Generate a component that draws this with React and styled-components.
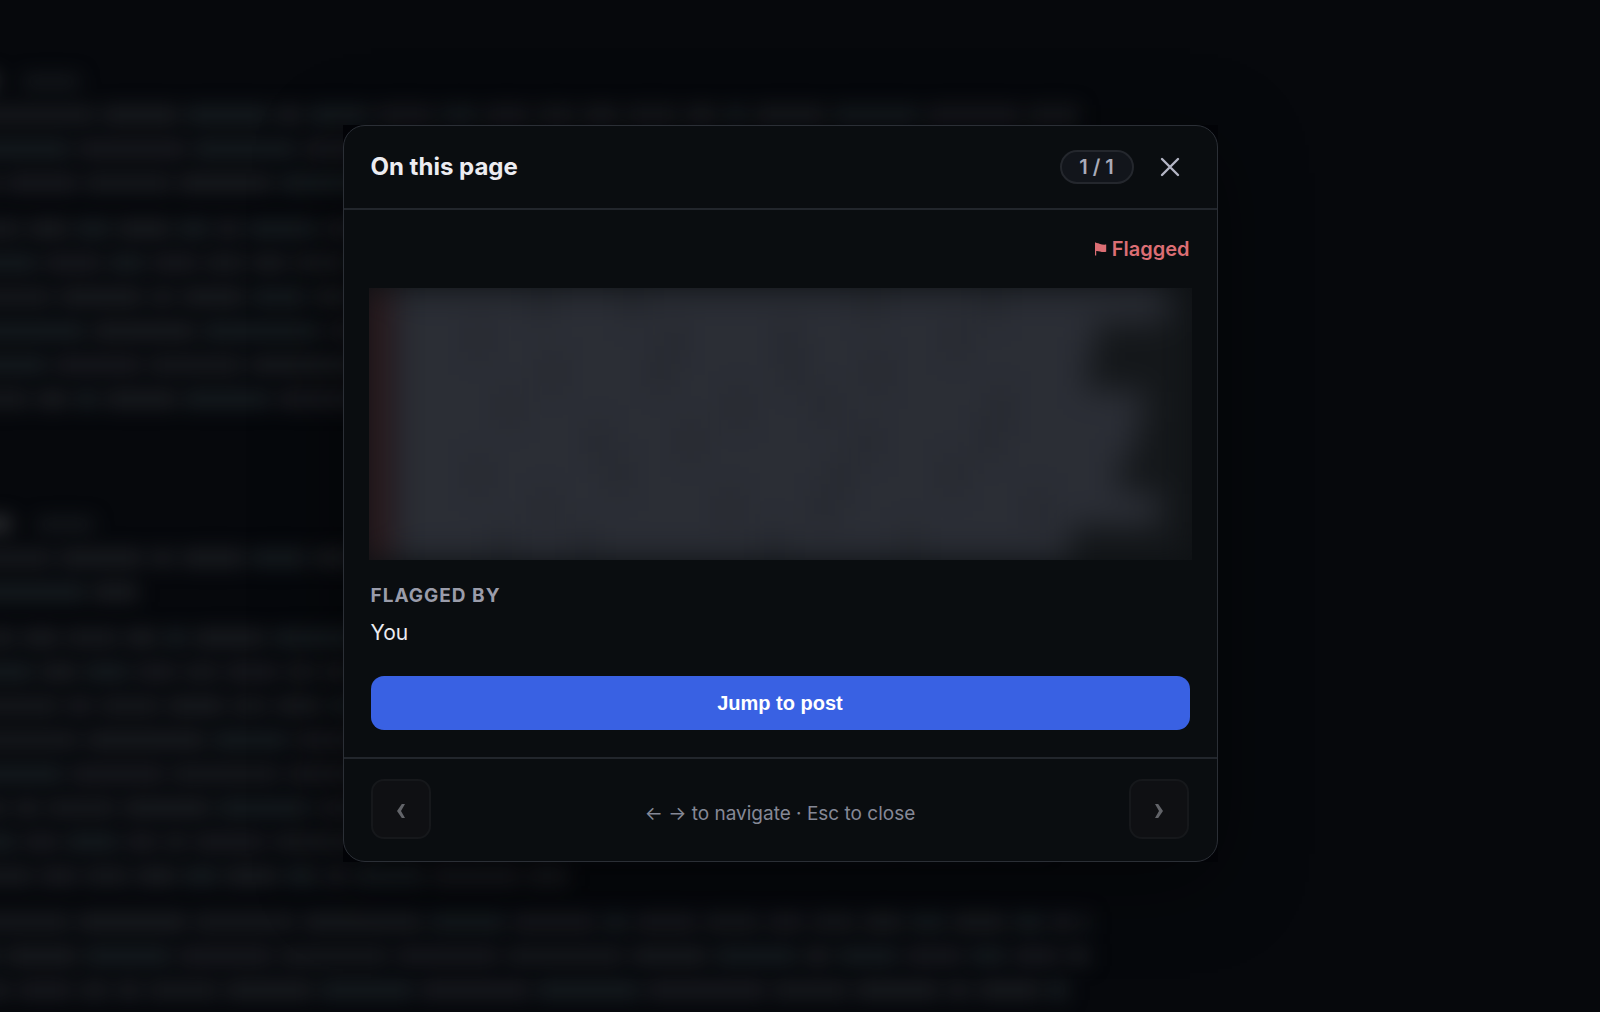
import React from "react";
import styled, { createGlobalStyle } from "styled-components";

const GlobalStyle = createGlobalStyle`
  *, *::before, *::after { box-sizing: border-box; }
  html, body { margin: 0; background: #06080c; }
  body { font-family: Inter, "Liberation Sans", sans-serif; color: #ececf1; }
  h2, h3, p { margin: 0; font: inherit; }
`;

const Page = styled.div`
  position: relative;
  min-height: 100vh;
  overflow: hidden;
  display: grid;
  background: #06080c;
`;

/* Blurred forum thread behind the dialog */
const Thread = styled.div`
  position: absolute;
  inset: 0 0 0 -24px;
  overflow: hidden;
  filter: blur(9px);
  padding-top: 64px;
`;
const Post = styled.div`
  max-width: 1114px;
  margin-bottom: ${(p) => p.$gap}px;
`;
const Paragraph = styled.div`
  margin-bottom: 12px;
`;
const Line = styled.div`
  display: flex;
  align-items: center;
  gap: 6px;
  height: 34px;
  width: ${(p) => p.$width};
  overflow: hidden;
`;
const Word = styled.span`
  flex: 0 0 auto;
  height: ${(p) => p.$height}px;
  border-radius: 4px;
  background: ${(p) => p.$color};
`;

const Overlay = styled.div`
  position: relative;
  display: flex;
  align-items: center;
  justify-content: center;
  padding: 24px 64px 49px 24px;
`;
const Frame = styled.div`
  width: 100%;
  max-width: 875px;
  background: #020307;
  box-shadow: 0 20px 80px rgba(0, 0, 0, 0.45);
`;
const Dialog = styled.section`
  border: 1px solid #2b2f36;
  border-radius: 22px;
  background: #0a0d10;
  overflow: hidden;
`;
const Header = styled.header`
  display: flex;
  align-items: center;
  gap: 16px;
  height: 84px;
  padding: 0 27px;
  border-bottom: 2px solid #22262c;
`;
const Title = styled.h2`
  flex: 1;
  font-size: 24px;
  line-height: 30px;
  font-weight: 700;
`;
const Counter = styled.span`
  display: flex;
  align-items: center;
  justify-content: center;
  min-width: 74px;
  height: 34px;
  border: 2px solid #24272d;
  border-radius: 17px;
  background: #12151b;
  color: #a9abb8;
  font-size: 20px;
  font-weight: 600;
`;
const CloseButton = styled.button`
  display: grid;
  place-items: center;
  width: 40px;
  height: 40px;
  padding: 0;
  border: 0;
  background: none;
  color: #b4b6c5;
  cursor: pointer;
`;
const Body = styled.div`
  padding: 24px 27px 27px;
`;
const Status = styled.p`
  display: flex;
  align-items: center;
  justify-content: flex-end;
  gap: 5px;
  height: 30px;
  color: #dc6e74;
  font-size: 20px;
  font-weight: 600;
`;
const Quote = styled.div`
  margin: 24px -2px;
  overflow: hidden;
  background: #0e1114;
`;
const QuoteBlur = styled.div`
  display: flex;
  flex-direction: column;
  border-left: 16px solid #3c1c20;
  background: #14171a;
  filter: blur(16px);
`;
const QuoteLine = styled.div`
  height: 34px;
  width: ${(p) => p.$width}%;
  display: flex;
  gap: 5px;
  padding: 1px 0 1px 10px;
  overflow: hidden;
`;
const QuoteWord = styled.span`
  flex: ${(p) => p.$size} 1 0;
  background: #2c2f37;
`;
const Label = styled.h3`
  color: #9a9caa;
  font-size: 19px;
  line-height: 24px;
  font-weight: 700;
  letter-spacing: 1px;
`;
const Flagger = styled.p`
  margin: 10px 0 28px;
  font-size: 21px;
  line-height: 30px;
`;
const JumpButton = styled.button`
  display: block;
  width: 100%;
  height: 54px;
  padding: 0;
  border: 0;
  border-radius: 13px;
  background: #3961e3;
  color: #fff;
  font: 700 20px "Liberation Sans", Arial, sans-serif;
  cursor: pointer;
`;
const Footer = styled.footer`
  display: flex;
  align-items: center;
  justify-content: space-between;
  padding: 20px 27px 22px;
  border-top: 2px solid #22262c;
`;
const NavButton = styled.button`
  display: grid;
  place-items: center;
  width: 60px;
  height: 60px;
  padding: 4px 0 0;
  border: 2px solid #16181b;
  border-radius: 13px;
  background: #0f1013;
  color: #626469;
`;
const Hint = styled.p`
  padding-top: 10px;
  color: #858896;
  font-size: 19px;
  line-height: 24px;
`;

const WORDS = [72, 38, 104, 54, 27, 88, 46, 120, 33, 62, 95, 41, 77, 24, 58, 110, 36, 84];
const TONES = ["#15171b", "#17191d", "#14191d", "#16171c"];

function TextLine({ seed, width = "98%" }) {
  const words = Array.from({ length: 22 }, (_, i) => (seed * 7 + i * 5) % WORDS.length);
  return (
    <Line $width={width}>
      {words.map((w, i) => (
        <Word key={i} $height={20} $color={TONES[(w + seed) % 4]} style={{ width: WORDS[w] }} />
      ))}
    </Line>
  );
}

const POSTS = [
  { gap: 91, name: 22, paragraphs: [["99%", "96%", "97%"], ["98%", "96%", "97%", "98%", "95%", "97%"]] },
  {
    gap: 0,
    name: 36,
    paragraphs: [
      ["98%", "162px"],
      ["98%", "97%", "98%", "96%", "98%", "97%", "96%", "592px"],
      ["100%", "100%", "98%"],
    ],
  },
];

const QUOTE_LINES = [
  { width: 97, words: [5, 3, 8, 4, 6] },
  { width: 88, words: [3, 7, 4, 6, 5] },
  { width: 87, words: [6, 4, 5, 3, 8] },
  { width: 94, words: [4, 8, 3, 6, 5] },
  { width: 93, words: [7, 3, 6, 4, 5] },
  { width: 91, words: [3, 5, 8, 4, 6] },
  { width: 96, words: [5, 6, 3, 7, 4] },
  { width: 85, words: [4, 3, 7, 5, 6] },
];

function Chevron({ flip }) {
  return (
    <svg width="10" height="16" viewBox="0 0 10 16" aria-hidden="true">
      <path
        d={flip ? "M1 1h3.2L9 8l-4.8 7H1l4-7z" : "M9 1H5.8L1 8l4.8 7H9L5 8z"}
        fill="currentColor"
      />
    </svg>
  );
}

export default function App() {
  return (
    <Page>
      <GlobalStyle />
      <Thread aria-hidden="true">
        {POSTS.map((post, p) => (
          <Post key={p} $gap={post.gap}>
            <Line $width="240px">
              <Word $height={18} $color="#26282b" style={{ width: post.name }} />
              <Word $height={18} $color="none" style={{ width: 12 }} />
              <Word $height={15} $color="#13161a" style={{ width: 58 }} />
            </Line>
            {post.paragraphs.map((lines, i) => (
              <Paragraph key={i}>
                {lines.map((width, n) => (
                  <TextLine key={n} seed={p * 11 + i * 5 + n * 3 + 1} width={width} />
                ))}
              </Paragraph>
            ))}
          </Post>
        ))}
      </Thread>
      <Overlay>
        <Frame>
          <Dialog role="dialog" aria-modal="true" aria-labelledby="dialog-title">
            <Header>
              <Title id="dialog-title">On this page</Title>
              <Counter>1 / 1</Counter>
              <CloseButton type="button" aria-label="Close">
                <svg width="20" height="20" viewBox="0 0 20 20" aria-hidden="true">
                  <path d="M2 2l16 16M18 2L2 18" stroke="currentColor" strokeWidth="2.4" strokeLinecap="round" />
                </svg>
              </CloseButton>
            </Header>
            <Body>
              <Status>
                <svg width="12" height="14" viewBox="0 0 12 14" aria-hidden="true">
                  <path d="M0.6 0.5V13.5" stroke="currentColor" strokeWidth="1.2" />
                  <path d="M0.5 1C4 0.4 6 3.4 11.2 2.6v7.2C6 10.6 4 8.4 0.5 9z" fill="currentColor" />
                </svg>
                Flagged
              </Status>
              <Quote aria-hidden="true">
                <QuoteBlur>
                  {QUOTE_LINES.map((line, i) => (
                    <QuoteLine key={i} $width={line.width}>
                      {line.words.map((size, n) => (
                        <QuoteWord key={n} $size={size} />
                      ))}
                    </QuoteLine>
                  ))}
                </QuoteBlur>
              </Quote>
              <Label>FLAGGED BY</Label>
              <Flagger>You</Flagger>
              <JumpButton type="button">Jump to post</JumpButton>
            </Body>
            <Footer>
              <NavButton type="button" aria-label="Previous" disabled>
                <Chevron />
              </NavButton>
              <Hint>← → to navigate · Esc to close</Hint>
              <NavButton type="button" aria-label="Next" disabled>
                <Chevron flip />
              </NavButton>
            </Footer>
          </Dialog>
        </Frame>
      </Overlay>
    </Page>
  );
}
